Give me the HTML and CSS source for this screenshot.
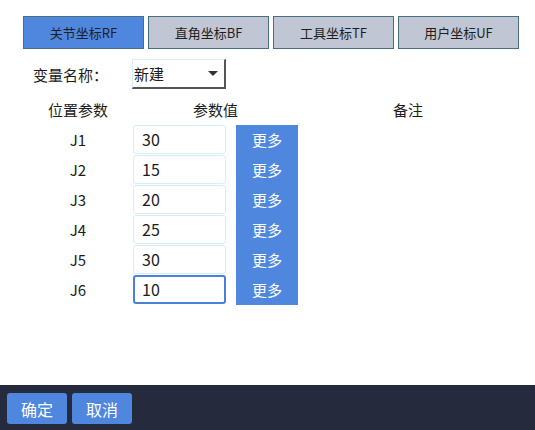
FILE: index.html
```html
<!DOCTYPE html>
<html lang="zh">
<head>
<meta charset="utf-8">
<link rel="stylesheet" href="styles.css">
</head>
<body>
<div class="page">
  <div class="main">
    <div class="tabs">
      <div class="tab active">关节坐标RF</div>
      <div class="tab">直角坐标BF</div>
      <div class="tab">工具坐标TF</div>
      <div class="tab">用户坐标UF</div>
    </div>
    <div class="var-row">
      <span class="var-label">变量名称：</span>
      <div class="select"><span>新建</span><span class="arrow"></span></div>
    </div>
    <div class="grid">
      <div class="hd">位置参数</div>
      <div class="hd span2">参数值</div>
      <div class="hd">备注</div>

      <div class="name">J1</div><div class="inp">30</div><div class="more">更多</div><div></div>
      <div class="name">J2</div><div class="inp">15</div><div class="more">更多</div><div></div>
      <div class="name">J3</div><div class="inp">20</div><div class="more">更多</div><div></div>
      <div class="name">J4</div><div class="inp">25</div><div class="more">更多</div><div></div>
      <div class="name">J5</div><div class="inp">30</div><div class="more">更多</div><div></div>
      <div class="name">J6</div><div class="inp focus">10</div><div class="more">更多</div><div></div>
    </div>
  </div>
  <div class="footer">
    <div class="btn">确定</div>
    <div class="btn">取消</div>
  </div>
</div>
</body>
</html>
```
FILE: styles.css
```css
* { box-sizing: border-box; }
html, body { margin: 0; padding: 0; background: #fff; }
body {
  font-family: "Noto Sans CJK SC", "Noto Sans", sans-serif;
  color: #1c1c1c;
}
.page { width: 535px; height: 430px; display: flex; flex-direction: column; }
.main { flex: 1; }
.tabs {
  display: flex;
  gap: 4px;
  padding: 16px 0 0 23px;
}
.tab {
  width: 121px;
  height: 33px;
  border: 1px solid #476f7c;
  background: #c0c6d3;
  font-size: 13px;
  display: flex;
  align-items: center;
  justify-content: center;
  color: #1e1e1e;
}
.tab.active { background: #5087de; }
.var-row {
  display: flex;
  align-items: center;
  margin-top: 10px;
  padding-left: 33px;
  height: 30px;
}
.var-label { font-size: 15px; width: 99px; }
.select {
  width: 94px;
  height: 30px;
  border: 1px solid #d6eef6;
  border-right: 2px solid #555;
  border-bottom: 2px solid #555;
  display: flex;
  align-items: center;
  justify-content: space-between;
  padding: 0 6px 0 1px;
  font-size: 15px;
}
.arrow {
  width: 0; height: 0;
  border-left: 5px solid transparent;
  border-right: 5px solid transparent;
  border-top: 5px solid #333;
}
.grid {
  display: grid;
  grid-template-columns: 90px 93px 62px 200px;
  column-gap: 10px;
  padding-left: 33px;
  margin-top: 6px;
}
.hd {
  font-size: 15px;
  text-align: center;
  height: 30px;
  line-height: 30px;
}
.hd.span2 { grid-column: span 2; }
.name {
  height: 30px;
  line-height: 30px;
  text-align: center;
  font-size: 15px;
}
.inp {
  height: 29px;
  margin-bottom: 1px;
  border: 1px solid #d6eef6;
  border-radius: 3px;
  font-size: 16px;
  line-height: 27px;
  padding-left: 8px;
}
.inp.focus { border: 2px solid #4a7fd8; padding-left: 7px; line-height: 25px; }
.more {
  height: 30px;
  background: #5087de;
  color: #fff;
  font-size: 15px;
  text-align: center;
  line-height: 30px;
}
.footer {
  height: 45px;
  background: #252b3d;
  display: flex;
  gap: 5px;
  padding: 8px 0 0 7px;
}
.btn {
  width: 60px;
  height: 31px;
  background: #5087de;
  color: #fff;
  border-radius: 3px;
  font-size: 16px;
  display: flex;
  align-items: center;
  justify-content: center;
}
```
